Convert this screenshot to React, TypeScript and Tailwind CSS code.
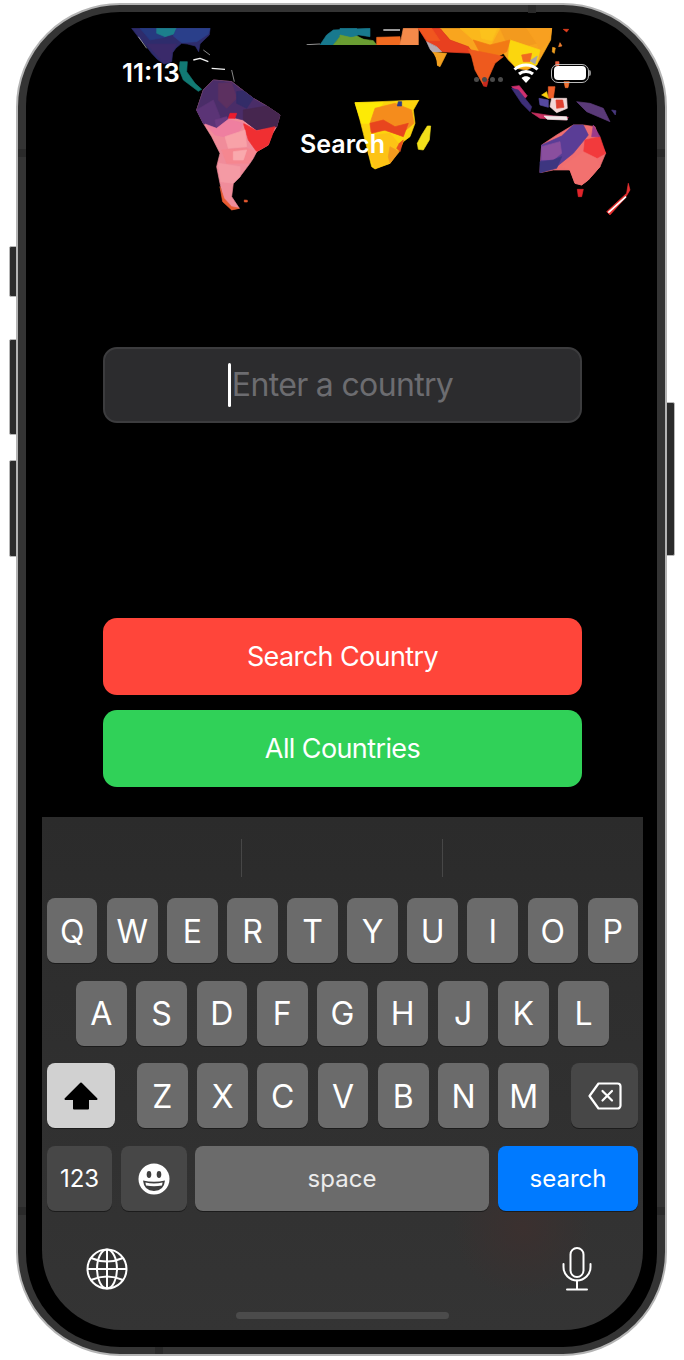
import React from "react";

type Shape = [string, string];

const westMap: Shape[] = [
  ["#2e2c6c", "95,25 330,25 328,45 312,60 300,72 296,95 286,78 262,72 245,70 228,84 218,98 215,125 192,132 172,118 155,100 140,80 118,55"],
  ["#263a80", "120,25 170,25 170,42 195,52 150,60"],
  ["#1c7f8c", "170,25 230,25 222,42 195,50 170,40"],
  ["#2a3f8a", "230,25 330,25 325,42 290,65 245,68 220,48"],
  ["#3a2a6a", "140,72 230,72 215,100 212,125 192,130"],
  ["#127a74", "240,125 262,125 260,155 285,190 305,208 295,214 250,180 238,150"],
  ["#f08c9a", "340,180 395,185 430,212 460,235 500,258 540,285 530,320 515,345 505,375 470,395 460,415 450,430 435,450 420,470 400,490 395,530 418,565 395,568 370,535 360,490 350,440 360,400 335,350 310,310 290,270 310,210"],
  ["#4a2d68", "310,210 340,180 395,185 430,212 460,235 500,258 540,285 530,320 470,330 430,300 390,290 350,325 310,310 290,270"],
  ["#5c3060", "355,190 395,188 410,235 380,265 355,240"],
  ["#332c68", "410,215 430,212 460,235 440,265 410,250"],
  ["#46264f", "430,270 500,258 540,285 530,320 470,330 430,300"],
  ["#5b3476", "290,270 340,240 360,290 350,325 310,310"],
  ["#6a3a80", "345,300 380,290 385,300 350,325"],
  ["#f02f32", "430,310 470,332 525,320 515,350 505,375 470,395 445,360"],
  ["#ea1c2e", "390,280 410,280 405,295 385,295"],
  ["#ef7fa0", "315,312 350,325 385,298 430,310 410,350 370,350 345,345"],
  ["#f8a2a8", "375,350 435,330 440,380 385,385"],
  ["#f58790", "365,390 440,385 470,395 445,430 380,430"],
  ["#f9a9ad", "400,395 440,390 430,420 400,420"],
  ["#f49aa4", "355,430 420,440 420,470 400,490 362,485"],
  ["#e85a30", "360,500 372,535 395,560 418,565 395,570 368,545"],
  ["#e85a30", "433,540 442,541 442,546 433,546"],
  ["#18798e", "660,75 680,45 700,30 810,25 810,50 760,42 720,50 700,75"],
  ["#6a9d32", "700,75 720,50 760,42 790,58 810,75"],
];

const eastMap: Shape[] = [
  ["#18798e", "0,25 50,25 55,45 30,52 0,45"],
  ["#6a9d32", "0,45 30,52 100,62 110,75 0,75"],
  ["#f06a20", "110,52 180,50 182,75 110,75"],
  ["#f48a4a", "190,25 235,25 235,75 180,75"],
  ["#f9a51e", "300,25 635,25 632,60 610,100 590,135 560,150 530,145 505,120 490,100 470,110 430,100 400,100 385,80 330,60"],
  ["#e8401f", "235,25 300,25 330,60 385,80 400,100 300,95 290,80 260,65"],
  ["#f0561f", "235,25 275,25 300,62 262,62"],
  ["#b5a9b0", "260,65 290,80 305,95 275,98"],
  ["#f2a020", "275,97 320,100 300,140 290,135"],
  ["#fbb81c", "360,25 480,25 450,80 400,60"],
  ["#f39a1e", "480,25 560,25 590,70 510,90"],
  ["#fcc21c", "420,30 470,28 455,62 425,55"],
  ["#f8a020", "560,25 635,25 630,60 600,90 590,70"],
  ["#fbd60e", "510,60 600,90 590,135 530,145 505,115"],
  ["#f27a15", "400,60 450,75 510,60 500,95 470,110 420,98"],
  ["#ee5a1e", "385,88 470,105 490,110 465,130 445,175 437,195 430,195 405,150 395,110"],
  ["#c7281e", "430,180 445,180 440,200 430,198"],
  ["#f06a20", "545,105 575,100 570,125 550,125"],
  ["#a9a4a8", "570,122 592,108 585,132"],
  ["#e8401f", "670,28 686,28 680,36"],
  ["#f08030", "660,68 666,78 656,80"],
  ["#f0a020", "638,82 646,84 643,100 637,96"],
  ["#d03070", "515,200 538,197 562,228 555,235"],
  ["#3e2f78", "515,205 535,210 575,260 570,275 545,250"],
  ["#5548a0", "597,235 625,240 625,262 600,255"],
  ["#f0602a", "625,200 645,200 640,235 625,235"],
  ["#fbd00e", "605,225 620,215 625,235"],
  ["#f2d8d8", "635,235 680,235 682,265 650,278 630,260"],
  ["#e04030", "648,240 668,240 672,262 650,265"],
  ["#c83060", "575,278 640,288 685,292 680,300 600,295"],
  ["#f0e8e8", "612,288 680,290 682,300 622,298"],
  ["#f06040", "647,125 657,125 657,137 647,137"],
  ["#f07030", "672,185 688,185 684,203 676,203"],
  ["#5a3a78", "710,245 750,250 790,265 810,305 775,290 740,275"],
  ["#4a3a80", "815,270 828,272 826,285"],
  ["#f06e70", "605,375 650,345 700,315 730,315 765,320 780,365 797,400 780,440 745,480 725,495 705,490 690,450 640,450 600,458"],
  ["#5a3d96", "605,375 665,348 700,315 730,315 745,345 700,400 650,440 600,458"],
  ["#8a4f9e", "605,380 660,365 665,400 640,420 605,420"],
  ["#3d3680", "600,425 640,420 665,410 650,445 600,458"],
  ["#f23a3c", "735,360 780,350 797,400 770,415 730,405"],
  ["#9c3a8a", "760,315 780,350 755,350"],
  ["#f2716f", "665,440 730,395 770,415 780,440 745,480 725,495 705,490 690,450"],
  ["#e0242a", "712,508 730,508 725,530 715,530"],
  ["#e83030", "800,575 860,520 865,490 870,510 855,535 810,585"],
  ["#f2e01a", "262,318 272,318 268,360 250,390 235,388 232,370 245,345"],
  ["#fcd40e", "45,248 237,240 220,270 225,310 210,350 190,365 175,395 150,430 105,447 95,440 85,400 70,340 60,300"],
  ["#fdea05", "45,248 130,248 110,275 90,310 65,310"],
  ["#f58c1c", "105,265 165,250 215,270 222,310 180,345 130,330 92,335 90,310"],
  ["#e8451e", "90,310 130,300 165,320 205,310 190,350 135,330 95,340"],
  ["#2a3b8a", "175,245 185,245 185,258 172,258"],
  ["#fdc315", "100,345 150,340 175,370 150,430 105,445 85,400"],
  ["#e8501e", "178,370 190,360 180,395 170,385"],
  ["#f39a1e", "150,380 178,395 150,430 145,410"],
];

function WorldMap() {
  return (
    <svg viewBox="42 28 601 200" className="absolute left-0 top-0 h-[200px] w-[601px] blur-[0.6px]">
      <g transform="translate(100 20) scale(0.3333)" strokeLinejoin="round" strokeWidth="2">
        {westMap.map(([fill, points]) => (
          <polygon key={points} fill={fill} stroke={fill} points={points} />
        ))}
        <g fill="none" stroke="#f2f2f2" strokeWidth="4">
          <polyline points="280,120 300,115 325,125" />
          <polyline points="335,145 375,148" />
        </g>
        <g fill="none" stroke="#cccccc" strokeWidth="2">
          <polyline points="395,150 403,185" />
          <polyline points="310,90 330,105" />
          <polyline points="115,50 140,85" />
        </g>
        <polyline points="620,74 660,72" stroke="#dddddd" strokeWidth="2" fill="none" />
      </g>
      <g transform="translate(340 20) scale(0.3333)" strokeLinejoin="round" strokeWidth="2">
        {eastMap.map(([fill, points]) => (
          <polygon key={points} fill={fill} stroke={fill} points={points} />
        ))}
        <polyline points="805,578 858,530" stroke="#ffffff" strokeWidth="5" fill="none" />
        <polyline points="130,30 180,30" stroke="#e8e8e8" strokeWidth="4" fill="none" />
      </g>
    </svg>
  );
}

function Wifi() {
  return (
    <svg width="26" height="22" viewBox="0 0 26 22" fill="none" stroke="#fff" strokeWidth="3">
      <path d="M1.5 7.5C8 1.5 18 1.5 24.5 7.5" />
      <path d="M6 12C10 8.5 16 8.5 20 12" />
      <path d="M13 21l-4.5-5c2.5-2.4 6.5-2.4 9 0z" fill="#fff" stroke="none" />
    </svg>
  );
}

function Key({ label }: { label: string }) {
  return (
    <div className="flex h-[65px] flex-1 items-center justify-center rounded-[8px] bg-[#6b6b6b] pt-[2px] text-[32px] leading-none text-white shadow-[0_1px_0_#1c1c1c]">
      {label}
    </div>
  );
}

function LetterRow({ letters }: { letters: string[] }) {
  return (
    <div className="flex flex-1 gap-[9.6px]">
      {letters.map((l) => (
        <Key key={l} label={l} />
      ))}
    </div>
  );
}

function ShiftIcon() {
  return (
    <svg width="34" height="28" viewBox="0 0 34 28" fill="#000" stroke="#000" strokeWidth="2" strokeLinejoin="round">
      <path d="M17 1.5 32.5 17H24V26.5H10V17H1.5Z" />
    </svg>
  );
}

function BackspaceIcon() {
  return (
    <svg width="34" height="28" viewBox="0 0 34 28" fill="none" stroke="#fff" strokeWidth="2.2" strokeLinejoin="round" strokeLinecap="round">
      <path d="M10.5 1.5H29.5a3 3 0 0 1 3 3V23.5a3 3 0 0 1-3 3H10.5L1.5 14Z" />
      <path d="M14.5 9 24 18.5M24 9l-9.5 9.5" />
    </svg>
  );
}

function EmojiIcon() {
  return (
    <svg width="32" height="32" viewBox="-16 -16 32 32">
      <circle r="15.5" fill="#fff" />
      <ellipse cx="-5" cy="-4.5" rx="2.3" ry="3.4" fill="#3f3f3f" />
      <ellipse cx="5" cy="-4.5" rx="2.3" ry="3.4" fill="#3f3f3f" />
      <path d="M-11 1.5Q0 4 11 1.5Q10 12 0 12Q-10 12-11 1.5Z" fill="#3f3f3f" />
      <path d="M-8.6 3.6Q0 5.4 8.6 3.6L8 6.4Q0 8-8 6.4Z" fill="#fff" />
    </svg>
  );
}

function GlobeIcon() {
  return (
    <svg width="42" height="42" viewBox="0 0 42 42" fill="none" stroke="#fff" strokeWidth="2">
      <circle cx="21" cy="21" r="19.5" />
      <ellipse cx="21" cy="21" rx="10" ry="19.5" />
      <path d="M21 1.5V40.5M1.5 21H40.5" />
      <path d="M5 10Q21 17 37 10M5 32Q21 25 37 32" />
    </svg>
  );
}

function MicIcon() {
  return (
    <svg width="30" height="44" viewBox="0 0 30 44" fill="none" stroke="#fff" strokeWidth="2" strokeLinecap="round">
      <rect x="8.5" y="1" width="13" height="29" rx="6.5" />
      <path d="M1.5 17v3a13.5 13.5 0 0 0 27 0v-3" />
      <path d="M15 33.5V42M5 42.5H25" />
    </svg>
  );
}

export default function App() {
  return (
    <div className="relative h-[1360px] w-[684px] overflow-hidden bg-white pl-[16px] pt-[3px] font-[Inter,sans-serif]">
      <div className="absolute left-[9px] top-[246px] h-[51px] w-[9px] rounded-l-[2px] border border-[#b8b8b8] bg-[#2b2b2b]" />
      <div className="absolute left-[9px] top-[339px] h-[96px] w-[9px] rounded-l-[2px] border border-[#b8b8b8] bg-[#2b2b2b]" />
      <div className="absolute left-[9px] top-[460px] h-[97px] w-[9px] rounded-l-[2px] border border-[#b8b8b8] bg-[#2b2b2b]" />
      <div className="absolute left-[666px] top-[402px] h-[154px] w-[9px] rounded-r-[2px] border border-[#b8b8b8] bg-[#2b2b2b]" />

      <div className="relative h-[1353px] w-[651px] rounded-[104px] border-2 border-[#b4b4b4] bg-[#343434] px-[8px] py-[7px]">
        <div className="absolute left-0 top-[144px] h-[8px] w-[8px] bg-[#2a2a2a]" />
        <div className="absolute right-0 top-[144px] h-[8px] w-[8px] bg-[#2a2a2a]" />
        <div className="absolute left-0 top-[1202px] h-[8px] w-[8px] bg-[#2a2a2a]" />
        <div className="absolute right-0 top-[1202px] h-[8px] w-[8px] bg-[#2a2a2a]" />
        <div className="absolute left-[510px] top-0 h-[8px] w-[8px] bg-[#2a2a2a]" />
        <div className="absolute bottom-0 left-[137px] h-[7px] w-[8px] bg-[#2a2a2a]" />

        <div className="h-full w-full rounded-[94px] bg-black pb-[17px] pl-[16px] pr-[14px] pt-[16px]">
          <div className="flex h-full w-full flex-col overflow-hidden rounded-b-[80px] rounded-t-[72px] bg-black">
            <div className="relative h-[319px] shrink-0">
              <WorldMap />
              <div className="absolute left-[205px] top-[17px] h-[55px] w-[190px] rounded-[20px] bg-black" />
              <div className="absolute inset-x-0 top-0 flex h-[90px] items-center justify-between pl-[80px] pr-[52px] text-white">
                <span className="text-[26px] font-semibold leading-none">11:13</span>
                <div className="flex items-center">
                  <div className="mr-[10px] mt-[12px] flex gap-[3px]">
                    <span className="h-[5px] w-[5px] rounded-full bg-[#4a4a4a]" />
                    <span className="h-[5px] w-[5px] rounded-full bg-[#4a4a4a]" />
                    <span className="h-[5px] w-[5px] rounded-full bg-[#4a4a4a]" />
                    <span className="h-[5px] w-[5px] rounded-full bg-[#4a4a4a]" />
                  </div>
                  <div className="mr-[12px]">
                    <Wifi />
                  </div>
                  <div className="flex h-[19px] w-[38px] items-center justify-center rounded-[7px] border-[1.5px] border-[#bbbbbb]">
                    <div className="h-[14px] w-[32px] rounded-[4px] bg-white" />
                  </div>
                  <div className="h-[6px] w-[2px] rounded-r-[2px] bg-[#888888]" />
                </div>
              </div>
              <div className="absolute inset-x-0 top-[98px] text-center text-[25px] font-semibold leading-[36px] text-white">
                Search
              </div>
            </div>

            <div className="shrink-0 px-[61px]">
              <div className="flex h-[76px] items-center justify-center rounded-[14px] border-2 border-[#3c3c3e] bg-[#2c2c2e] pr-[4px]">
                <span className="h-[44px] w-[3px] rounded-full bg-white" />
                <span className="ml-[1px] text-[32px] leading-none tracking-[-0.66px] text-[#6c6c70]">Enter a country</span>
              </div>
              <div className="mt-[195px] flex h-[77px] items-center justify-center rounded-[14px] bg-[#ff453a] pt-[2px] text-[27px] tracking-[-0.6px] text-white">
                Search Country
              </div>
              <div className="mt-[15px] flex h-[77px] items-center justify-center rounded-[14px] bg-[#30d158] pt-[2px] text-[27px] tracking-[-0.6px] text-white">
                All Countries
              </div>
            </div>

            <div className="mt-[30px] flex min-h-0 flex-1 flex-col bg-[radial-gradient(circle_at_80%_80%,#3b302f_0,#34313100_11%),linear-gradient(#2b2b2b,#343434)] px-[5px]">
              <div className="flex h-[81px] shrink-0 items-center">
                <div className="ml-[194px] h-[38px] w-px bg-[#474747]" />
                <div className="ml-[200px] h-[38px] w-px bg-[#474747]" />
              </div>

              <div className="flex flex-col gap-[17.7px]">
                <LetterRow letters={["Q", "W", "E", "R", "T", "Y", "U", "I", "O", "P"]} />
                <div className="px-[29px]">
                  <LetterRow letters={["A", "S", "D", "F", "G", "H", "J", "K", "L"]} />
                </div>
                <div className="flex items-stretch justify-between">
                  <div className="flex h-[65px] w-[68px] items-center justify-center rounded-[8px] bg-[#d1d1d1] shadow-[0_1px_0_#1c1c1c]">
                    <ShiftIcon />
                  </div>
                  <div className="w-[412px]">
                    <LetterRow letters={["Z", "X", "C", "V", "B", "N", "M"]} />
                  </div>
                  <div className="flex h-[65px] w-[67px] items-center justify-center rounded-[8px] bg-[#474747] shadow-[0_1px_0_#1c1c1c]">
                    <BackspaceIcon />
                  </div>
                </div>
                <div className="flex h-[65px] text-[24px] text-white">
                  <div className="flex w-[65px] items-center justify-center rounded-[8px] bg-[#474747] shadow-[0_1px_0_#1c1c1c]">123</div>
                  <div className="ml-[9px] flex w-[66px] items-center justify-center rounded-[8px] bg-[#474747] shadow-[0_1px_0_#1c1c1c]">
                    <EmojiIcon />
                  </div>
                  <div className="ml-[8px] flex flex-1 items-center justify-center rounded-[8px] bg-[#6b6b6b] text-[#ececec] shadow-[0_1px_0_#1c1c1c]">space</div>
                  <div className="ml-[9px] flex w-[140px] items-center justify-center rounded-[8px] bg-[#007aff] shadow-[0_1px_0_#1c1c1c]">search</div>
                </div>
              </div>

              <div className="flex items-center justify-between pl-[39px] pr-[46px] pt-[36px]">
                <GlobeIcon />
                <MicIcon />
              </div>
              <div className="mx-auto mt-[21px] h-[7px] w-[213px] rounded-full bg-[#4b4b4b]" />
            </div>
          </div>
        </div>
      </div>
    </div>
  );
}
